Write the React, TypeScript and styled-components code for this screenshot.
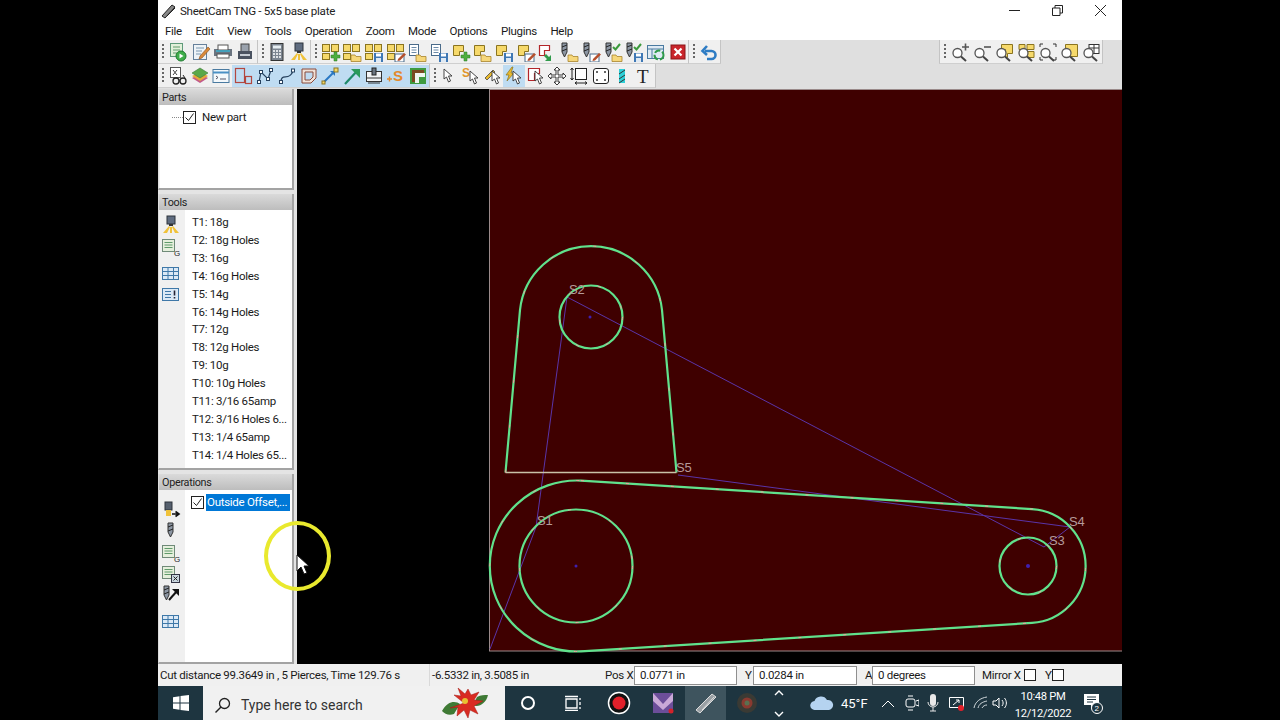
import React from "react";
import styled, { createGlobalStyle } from "styled-components";

const GlobalStyle = createGlobalStyle`
  html, body { margin: 0; padding: 0; background: #000; height: 100%; overflow: hidden; }
  * { box-sizing: border-box; }
`;

const UI = `Roboto, "Liberation Sans", sans-serif`;

const Stage = styled.div`
  position: relative;
  width: 964px;
  height: 720px;
  margin-left: 158px;
  display: flex;
  flex-direction: column;
  background: #f0f0f0;
  font-family: ${UI};
  font-size: 11.5px;
  letter-spacing: -0.28px;
  color: #1a1a1a;
  overflow: hidden;
`;
const TitleBar = styled.div`
  height: 20px;
  background: #fff;
  display: flex;
  align-items: center;
  gap: 2px;
  padding: 1px 0 0 2px;
  color: #222;
`;
const TitleText = styled.span`
  font-size: 11.6px;
`;
const WindowButtons = styled.div`
  margin-left: auto;
  display: flex;
`;
const WindowButton = styled.div`
  width: 43px;
  height: 18px;
  display: flex;
  align-items: center;
  justify-content: center;
`;
const MenuBar = styled.div`
  height: 20px;
  background: #fff;
  display: flex;
  align-items: center;
  gap: 13.5px;
  padding: 2px 0 0 7px;
`;
const ToolRows = styled.div`
  height: 49px;
  background: #dfdfdf;
  display: flex;
  flex-direction: column;
`;
const ToolRow = styled.div`
  height: 24px;
  display: flex;
`;
const Band = styled.div<{ $end?: boolean }>`
  height: 24px;
  display: flex;
  align-items: center;
  background: #f0f0f0;
  padding-left: 2px;
  border-right: 1px solid #c4c4c4;
  border-bottom: 1px solid #cfcfcf;
  ${(p) => p.$end && "margin-left: auto; margin-right: 19px; border-left: 1px solid #c4c4c4;"}
`;
const Grip = styled.div`
  width: 6px;
  height: 17px;
  margin-right: 1px;
  background: radial-gradient(circle, #666 0.9px, transparent 1.1px) center top / 6px 4px repeat-y;
`;
const ToolButton = styled.div<{ $active?: boolean; $pitch: number }>`
  width: ${(p) => p.$pitch}px;
  height: 22px;
  display: flex;
  align-items: center;
  justify-content: center;
  background: ${(p) => (p.$active ? "#bfdcf2" : "transparent")};
  svg { display: block; }
`;
const Main = styled.div`
  height: 575px;
  display: flex;
  background: #000;
`;
const Sidebar = styled.div`
  width: 139px;
  display: flex;
  flex-direction: column;
  gap: 4px;
  background: #e4e4e4;
  padding-right: 3px;
`;
const Panel = styled.section<{ $height: number }>`
  height: ${(p) => p.$height}px;
  display: flex;
  flex-direction: column;
  background: #f0f0f0;
  border-left: 1px solid #dcdcdc;
  border-right: 2px solid #a3a3a3;
  border-bottom: 2px solid #a3a3a3;
`;
const PanelHeader = styled.div`
  height: 16px;
  padding-left: 3px;
  font-size: 10.8px;
  line-height: 17px;
  color: #222;
  background: linear-gradient(#dadada, #bdbdbd);
`;
const PanelBody = styled.div`
  flex: 1;
  display: flex;
  min-height: 0;
`;
const TreeArea = styled.div`
  flex: 1;
  margin-left: 1px;
  background: #fff;
  padding: 3px 0 0 12px;
`;
const TreeRow = styled.div`
  display: flex;
  align-items: center;
  height: 18px;
  gap: 6px;
`;
const TreeDots = styled.span`
  width: 11px;
  margin-right: -6px;
  border-top: 1px dotted #888;
`;
const Check = styled.span<{ $size?: number }>`
  width: ${(p) => p.$size ?? 13}px;
  height: ${(p) => p.$size ?? 13}px;
  flex: none;
  border: 1px solid #222;
  background: #fff;
  display: flex;
  align-items: center;
  justify-content: center;
`;
const SideStrip = styled.div<{ $top: number }>`
  width: 26px;
  flex: none;
  display: flex;
  flex-direction: column;
  align-items: center;
  padding: ${(p) => p.$top}px 3px 0 0;
`;
const SideIcon = styled.div<{ $after?: number }>`
  height: 21px;
  display: flex;
  align-items: center;
  justify-content: center;
  margin-bottom: ${(p) => p.$after ?? 0}px;
`;
const ListArea = styled.div<{ $flush?: boolean }>`
  flex: 1;
  background: #fff;
  padding: ${(p) => (p.$flush ? "0" : "3px 0 0 7px")};
  overflow: hidden;
`;
const ListRow = styled.div`
  height: 17.92px;
  line-height: 18px;
  white-space: nowrap;
`;
const OpRow = styled.div`
  display: flex;
  align-items: center;
  height: 17px;
  margin: 4px 2px 0 6px;
  gap: 2px;
`;
const OpLabel = styled.span`
  flex: 1;
  height: 17px;
  line-height: 17px;
  padding-left: 1px;
  background: #0078d7;
  color: #fff;
  white-space: nowrap;
`;
const Canvas = styled.svg`
  flex: 1;
  display: block;
  height: 575px;
`;
const StatusBar = styled.div`
  height: 22px;
  display: flex;
  align-items: center;
  background: #f0f0f0;
  white-space: nowrap;
`;
const StatusCell = styled.div<{ $width: number; $line?: boolean }>`
  width: ${(p) => p.$width}px;
  flex: none;
  height: 100%;
  display: flex;
  align-items: center;
  padding-left: 2px;
  ${(p) => p.$line && "border-right: 1px solid #d9d9d9;"}
`;
const FieldLabel = styled.span<{ $left: number; $width: number }>`
  margin-left: ${(p) => p.$left}px;
  width: ${(p) => p.$width}px;
  flex: none;
`;
const Field = styled.div<{ $width: number }>`
  width: ${(p) => p.$width}px;
  height: 19px;
  border: 1px solid #8f8f8f;
  background: #fff;
  padding-left: 5px;
  line-height: 17px;
`;
const TaskBar = styled.div`
  height: 34px;
  display: flex;
  align-items: center;
  background: #1e3540;
  color: #fff;
`;
const StartButton = styled.div`
  width: 45px;
  height: 34px;
  display: flex;
  align-items: center;
  justify-content: center;
`;
const SearchBox = styled.div`
  width: 302px;
  height: 34px;
  background: #f1f1f1;
  color: #333;
  display: flex;
  align-items: center;
  gap: 9px;
  padding: 3px 0 0 11px;
  font-size: 14px;
  letter-spacing: 0;
  position: relative;
`;
const SearchArt = styled.div`
  position: absolute;
  right: 15px;
  top: 0;
`;
const TaskSlot = styled.div<{ $width: number; $active?: boolean }>`
  width: ${(p) => p.$width}px;
  height: 34px;
  flex: none;
  display: flex;
  align-items: center;
  justify-content: center;
  background: ${(p) => (p.$active ? "#3e545e" : "transparent")};
`;
const Weather = styled.span`
  width: 42px;
  flex: none;
  padding-left: 7px;
  font-size: 13px;
  letter-spacing: 0;
`;
const Clock = styled.div`
  width: 70px;
  flex: none;
  padding-top: 3px;
  text-align: center;
  font-size: 11.2px;
  line-height: 17px;
`;
const Highlight = styled.div`
  position: absolute;
  left: 106px;
  top: 521px;
  width: 67px;
  height: 70px;
  border-radius: 50%;
  border: 4px solid #e9e92e;
  pointer-events: none;
`;
const Pointer = styled.svg`
  position: absolute;
  left: 138px;
  top: 554px;
`;

/* ---- small icon bits ---- */
const Plus = () => <path d="M13 10h3v3h3v3h-3v3h-3v-3h-3v-3h3z" fill="#4fae3f" stroke="#2d7a2a" strokeWidth=".5" />;
const FolderB = () => <path d="M9 13h4l1 1.500h5v5H9z" fill="#f6d77a" stroke="#a8842c" strokeWidth=".8" />;
const SaveB = () => (
  <>
    <rect x="10" y="11" width="9" height="9" fill="#3f78b5" />
    <rect x="12" y="11.500" width="5" height="3" fill="#fff" />
    <rect x="12" y="16" width="5" height="4" fill="#dfe9f3" />
  </>
);
const EditB = () => (
  <>
    <rect x="9" y="12" width="9" height="8" fill="#fff" stroke="#4a6b8a" />
    <path d="M12 17l6-6 2 1.500-6 6-2.500.5z" fill="#b5502e" />
  </>
);
const Multi = () => (
  <g fill="#f6d96b" stroke="#8a7420" strokeWidth="1">
    <rect x="1.500" y="2.500" width="7" height="7" />
    <rect x="10.500" y="2.500" width="7" height="7" />
    <rect x="1.500" y="11.500" width="7" height="6" />
  </g>
);
const Single = () => <path d="M2.500 3.500h10v6h-4v4h-6z" fill="#f6d96b" stroke="#8a7420" />;
const Docs = () => (
  <g fill="#fff" stroke="#4a6b8a">
    <rect x="2.500" y="2.500" width="9" height="11" />
    <path d="M4.500 5.500h5M4.500 8h5M4.500 10.500h5" stroke="#6b8aa8" />
  </g>
);
const Drill = ({ x = 3 }: { x?: number }) => (
  <g transform={`translate(${x} 1)`}>
    <path d="M0 0h5v9l-2.500 5L0 9z" fill="#8c96a3" stroke="#333" />
    <path d="M0 4l5-2M0 8l5-2" stroke="#222" />
  </g>
);
const Tick = () => <path d="M10 5l2.500 2.500L17 2" fill="none" stroke="#3c9a3c" strokeWidth="2" />;
const Head = () => (
  <>
    <rect x="6" y="1" width="8" height="8" fill="#5f6c80" stroke="#2d333b" />
    <rect x="8" y="9" width="4" height="2" fill="#333" />
    <path d="M8 11l-6 7h4l3-6zM12 11l6 7h-4l-3-6zM9 12h2v6H9z" fill="#f0c23a" />
  </>
);
const DocG = () => (
  <>
    <rect x="1.500" y="2.500" width="12" height="12" fill="#e5efdc" stroke="#6f8a78" />
    <path d="M3.500 5.500h8M3.500 8h8M3.500 10.500h8" stroke="#5f9a6a" />
  </>
);
const Table = () => (
  <>
    <rect x="1.500" y="3.500" width="16" height="12" fill="#dbe9f6" stroke="#3f78a8" />
    <path d="M1.500 7.500h16M1.500 11.500h16M7 3.500v12M12.500 3.500v12" stroke="#3f78a8" />
  </>
);
const CursorMini = ({ x = 9, y = 5 }: { x?: number; y?: number }) => (
  <path transform={`translate(${x} ${y})`} d="M0 0l8 7H4.500l2 5-2 1-2-5L0 10z" fill="#fff" stroke="#333" strokeWidth=".9" />
);
const Lens = () => (
  <>
    <circle cx="7.500" cy="11" r="4.500" fill="#fff" stroke="#555" strokeWidth="1.300" />
    <path d="M11 14.500l5 4.500" stroke="#444" strokeWidth="2" />
  </>
);
const YellowDoc = ({ d }: { d: string }) => <path d={d} fill="#f6d96b" stroke="#8a7420" />;

const icons: Record<string, React.ReactNode> = {
  run: (<><rect x="2.500" y="1.500" width="12" height="13" fill="#e2f0da" stroke="#5f9a7a" /><path d="M5 5h7M5 8h7M5 11h4" stroke="#5f9a6a" /><circle cx="13" cy="14" r="5" fill="#3fae4a" stroke="#1f7a2f" /><path d="M11.500 11.500l4 2.500-4 2.500z" fill="#fff" /></>),
  editDoc: (<><rect x="2.500" y="2.500" width="13" height="15" fill="#eef3f7" stroke="#66809a" /><path d="M5 6h8M5 9h6M5 12h5" stroke="#7a97b0" /><path d="M9 14l8-9 2 2-8 9-3 1z" fill="#d98a3a" stroke="#8a4f1e" strokeWidth=".6" /></>),
  preview: (<><rect x="1" y="7" width="18" height="7" fill="#6a7480" /><rect x="5" y="3" width="10" height="5" fill="#fff" stroke="#555" /><rect x="4" y="12" width="12" height="4" fill="#fff" stroke="#555" /><path d="M3 9h14" stroke="#3ab0d0" strokeWidth="1.500" /></>),
  printer: (<><rect x="6" y="2" width="8" height="8" fill="#9aa2ad" stroke="#444" /><rect x="3" y="9" width="14" height="8" fill="#4a5260" /><rect x="5" y="12" width="10" height="2" fill="#c6ccd4" /></>),
  calc: (<><rect x="4" y="1.500" width="12" height="17" fill="#7c8590" stroke="#333" /><rect x="6" y="3.500" width="8" height="3" fill="#e6eef2" /><path d="M6 9h2M9 9h2M12 9h2M6 12h2M9 12h2M12 12h2M6 15h2M9 15h2M12 15h2" stroke="#fff" strokeWidth="1.500" /></>),
  head: <Head />,
  multiPlus: (<><Multi /><Plus /></>),
  multiFolder: (<><Multi /><FolderB /></>),
  multiSave: (<><Multi /><SaveB /></>),
  multiEdit: (<><Multi /><EditB /></>),
  docFolder: (<><Docs /><FolderB /></>),
  docSave: (<><Docs /><SaveB /></>),
  onePlus: (<><Single /><Plus /></>),
  oneFolder: (<><Single /><FolderB /></>),
  oneSave: (<><Single /><SaveB /></>),
  oneEdit: (<><Single /><EditB /></>),
  redArrow: (<><path d="M2.500 3.500h10v5h-5v5h-5z" fill="#fff" stroke="#b3262a" strokeWidth="1.200" /><path d="M9 12l3 3 2-2v6h-6l2-2-3-3z" fill="#2f9a4a" /></>),
  drillFolder: (<><Drill /><FolderB /></>),
  drillEdit: (<><Drill /><EditB /></>),
  drillTickFolder: (<><Drill /><Tick /><FolderB /></>),
  drillTickSave: (<><Drill /><Tick /><SaveB /></>),
  refresh: (<><rect x="1.500" y="3.500" width="16" height="13" fill="#dfeaf4" stroke="#4a7aa0" /><path d="M1.500 7h16M6 7v9" stroke="#4a7aa0" /><circle cx="13" cy="13" r="4.500" fill="none" stroke="#2f9a4a" strokeWidth="2" strokeDasharray="6 2" /></>),
  cross: (<><rect x="3" y="3" width="14" height="14" fill="#c9252b" stroke="#8a1519" /><path d="M6.500 6.500l7 7M13.500 6.500l-7 7" stroke="#fff" strokeWidth="2.200" /></>),
  undo: (<path d="M6 9h6.500a4 4 0 0 1 0 8H8M8 4L3.500 9 8 13" fill="none" stroke="#2e7cc4" strokeWidth="2.600" />),
  glasses: (<><rect x="2.500" y="1.500" width="10" height="10" fill="#fff" stroke="#555" /><path d="M5 4l4 5M9 4L5 9" stroke="#444" /><circle cx="8" cy="15" r="3" fill="none" stroke="#222" strokeWidth="1.300" /><circle cx="15" cy="15" r="3" fill="none" stroke="#222" strokeWidth="1.300" /><path d="M11 15h1M17 12l-2-3" stroke="#222" /></>),
  layers: (<><path d="M10 8l8 4-8 5-8-5z" fill="#c25a8a" /><path d="M10 6l8 4-8 5-8-5z" fill="#e3a93a" /><path d="M10 2l8 5-8 5-8-5z" fill="#5aa84a" stroke="#3a7a3a" strokeWidth=".6" /></>),
  terminal: (<><rect x="2" y="3.500" width="16" height="13" fill="#f4f8fb" stroke="#4a7aa0" /><path d="M2 6.500h16" stroke="#4a90c4" strokeWidth="2" /><path d="M5 10l2 1.500-2 1.500M9 13h6" stroke="#556" fill="none" /></>),
  twoShapes: (<><rect x="2.500" y="2.500" width="9" height="14" fill="none" stroke="#b3473f" strokeWidth="1.200" /><rect x="12.500" y="10.500" width="6" height="7" fill="none" stroke="#b3473f" strokeWidth="1.200" /></>),
  nodes: (<><path d="M4 16L6 6l7 7 3-9" fill="none" stroke="#27415e" strokeWidth="1.200" /><g fill="#fff" stroke="#27415e"><rect x="2.500" y="14.500" width="3" height="3" /><rect x="4.500" y="4.500" width="3" height="3" /><rect x="11.500" y="11.500" width="3" height="3" /><rect x="14.500" y="2.500" width="3" height="3" /></g></>),
  curve: (<><path d="M4 16C4 6 12 16 16 5" fill="none" stroke="#27415e" strokeWidth="1.300" /><g fill="#fff" stroke="#27415e"><rect x="2.500" y="14.500" width="3" height="3" /><rect x="14.500" y="3" width="3" height="3" /></g></>),
  outline: (<path d="M3 3h14v9l-5 5H3zM6 6v8h5l3-3V6z" fill="#f0e2d8" stroke="#8a4a3a" />),
  blueArrow: (<><path d="M3 17L14 6" stroke="#2a78c4" strokeWidth="2" /><path d="M10 5h5v5z" fill="#2a78c4" /><rect x="14" y="2" width="4" height="4" fill="#f6d96b" stroke="#8a7420" /><rect x="2" y="15" width="3" height="3" fill="#f6d96b" stroke="#8a7420" /></>),
  greenArrow: (<><path d="M3 18L16 4" stroke="#1f8a6a" strokeWidth="2.200" /><path d="M9 3h9v9z" fill="#2a9a5a" /></>),
  machine: (<><rect x="2.500" y="5.500" width="15" height="10" fill="#f2f4f6" stroke="#333" /><rect x="8" y="2" width="4" height="7" fill="#6a7480" stroke="#222" /><path d="M2.500 12h15M4 17h12" stroke="#333" /></>),
  plusS: (<><path d="M1 13h5M3.500 10.500v5" stroke="#e48a2c" strokeWidth="1.400" /><text x="7" y="15" fontSize="15" fontWeight="700" fontFamily="Liberation Sans, sans-serif" fill="#e48a2c">S</text></>),
  brownSquare: (<><rect x="3" y="3" width="14" height="14" fill="#7a4a20" stroke="#3f9a3f" strokeWidth="2" /><rect x="7" y="7" width="10" height="10" fill="#eef6ee" /><path d="M11 11h6v6h-6z" fill="#3f9a3f" /></>),
  cursor: <CursorMini x={5} y={3} />,
  sCursor: (<><text x="1" y="11" fontSize="12" fontWeight="700" fontFamily="Liberation Sans, sans-serif" fill="#e0962c">S</text><CursorMini /></>),
  lineCursor: (<><path d="M2 12l8-8 2 2-8 8z" fill="#e8b92e" stroke="#333" strokeWidth=".7" /><CursorMini /></>),
  boltCursor: (<><path d="M8 1L2 9h3l-2 6 7-8H7l2-6z" fill="#e8b92e" stroke="#8a7420" strokeWidth=".7" /><CursorMini /></>),
  redCursor: (<><path d="M2.500 2.500h11v5h-5v7h-6z" fill="#fff" stroke="#b3262a" strokeWidth="1.200" /><CursorMini /></>),
  move: (<path d="M10 1l3 3h-2v5h5V7l3 3-3 3v-2h-5v5h2l-3 3-3-3h2v-5H4v2l-3-3 3-3v2h5V4H7z" fill="#fff" stroke="#222" strokeWidth=".9" />),
  resize: (<><rect x="6.500" y="2.500" width="11" height="11" fill="#fff" stroke="#222" /><path d="M3 2v12M1.500 4L3 2l1.500 2M1.500 12L3 14l1.500-2M6 17h12M8 15.500L6 17l2 1.500M16 15.500l2 1.500-2 1.500" fill="none" stroke="#222" /></>),
  frame: (<><rect x="2.500" y="2.500" width="15" height="15" rx="2.500" fill="#fff" stroke="#222" /><g fill="#333"><circle cx="6" cy="6" r="1" /><circle cx="14" cy="6" r="1" /><circle cx="6" cy="14" r="1" /><circle cx="14" cy="14" r="1" /></g></>),
  cyanDrill: (<><rect x="7" y="3" width="6" height="14" fill="#2fd0d8" /><path d="M7 8l6-4M7 13l6-4M7 17l6-4" stroke="#333" /></>),
  text: (<text x="3" y="17" fontSize="19" fontFamily="Liberation Serif, serif" fill="#222">T</text>),
  zoomIn: (<><Lens /><path d="M15.500 1.500v7M12 5h7" stroke="#555" strokeWidth="1.600" /></>),
  zoomOut: (<><Lens /><path d="M12 5h7" stroke="#555" strokeWidth="1.600" /></>),
  zoomPart: (<><YellowDoc d="M7.500 2.500h11v9h-5v4h-2v-8h-4z" /><Lens /></>),
  zoomParts: (<><YellowDoc d="M3 2.500h6v5H3zM11 2.500h7v5h-7zM11 9.500h7v6h-7z" /><Lens /></>),
  zoomFit: (<><path d="M2 5V2h3M15 2h3v3M2 15v3h3M15 18h3v-3" fill="none" stroke="#333" /><Lens /></>),
  zoomSheet: (<><YellowDoc d="M6.500 2.500h12v12h-12z" /><Lens /></>),
  zoomMachine: (<><rect x="8" y="2.500" width="10" height="9" fill="#fff" stroke="#333" /><path d="M8 6h10M13 2v9" stroke="#333" /><Lens /></>),
  docG: (<><DocG /><text x="13" y="19" fontSize="8" fontFamily="Liberation Sans, sans-serif" fill="#222">G</text></>),
  docX: (<><DocG /><rect x="10.500" y="10.500" width="8" height="8" fill="#c9d6df" stroke="#334" /><path d="M12.500 12.500l4 4M16.500 12.500l-4 4" stroke="#222" /></>),
  table: <Table />,
  listBang: (<><rect x="1.500" y="3.500" width="16" height="12" fill="#dbe9f6" stroke="#3f78a8" /><path d="M4 6.500h6M4 9.500h6M4 12.500h6" stroke="#3f78a8" /><path d="M13.500 5.500v5M13.500 12v1.500" stroke="#223" strokeWidth="1.600" /></>),
  headArrow: (<><rect x="4" y="1" width="7" height="8" fill="#56606e" stroke="#2d333b" /><rect x="5" y="9" width="5" height="6" fill="#f0c23a" /><path d="M11 13h6M14.500 10.500L18 13l-3.500 2.500" fill="none" stroke="#111" strokeWidth="1.600" /></>),
  drill: <Drill x={7} />,
  drillArrow: (<><Drill x={3} /><path d="M8 15L16 6" stroke="#111" strokeWidth="2" /><path d="M11 4h7v7z" fill="#111" /></>),
};

const Icon = ({ name, size = 20 }: { name: string; size?: number }) => (
  <svg width={size} height={size} viewBox="0 0 20 20">{icons[name]}</svg>
);

const Tools = ({ names, active = [], pitch = 21.7 }: { names: string[]; active?: string[]; pitch?: number }) => (
  <>
    {names.map((n) => (
      <ToolButton key={n} $pitch={pitch} $active={active.includes(n)}><Icon name={n} /></ToolButton>
    ))}
  </>
);

const toolNames = [
  "T1: 18g", "T2: 18g Holes", "T3: 16g", "T4: 16g Holes", "T5: 14g", "T6: 14g Holes", "T7: 12g",
  "T8: 12g Holes", "T9: 10g", "T10: 10g Holes", "T11: 3/16 65amp", "T12: 3/16 Holes 6...", "T13: 1/4 65amp", "T14: 1/4 Holes 65...",
];
const menus = ["File", "Edit", "View", "Tools", "Operation", "Zoom", "Mode", "Options", "Plugins", "Help"];
const activeRow2 = ["twoShapes", "nodes", "curve", "outline", "blueArrow", "greenArrow", "machine", "plusS", "brownSquare", "boltCursor"];

const Tick12 = () => (
  <svg width="11" height="11" viewBox="0 0 11 11"><path d="M1.500 5.500l3 3 5-7" fill="none" stroke="#222" /></svg>
);

const Drawing = () => {
  const green = "#60e28c";
  const partOne = "M505.500 472.500L520 310A71.400 71.400 0 0 1 662 310L676.500 472.500";
  const partTwo = "M581 480.600L1032 509.100A57 57 0 0 1 1032 622.900L581 651.400A87 85.500 0 1 1 581 480.600Z";
  const dash = { fill: "none", stroke: "#f0a0a0", strokeWidth: 1, strokeDasharray: "3 42" };
  const labels: [string, number, number][] = [["S2", 569, 294], ["S5", 676, 472], ["S1", 537, 525], ["S3", 1049, 545], ["S4", 1069, 526]];
  return (
    <Canvas viewBox="297 89 825 575">
      <rect x="297" y="89" width="825" height="575" fill="#000" />
      <rect x="489.500" y="89.500" width="633" height="561.500" fill="#3f0000" stroke="#9a8a8a" strokeWidth="1" />
      <g fill="none" stroke="#5a34a8" strokeWidth="1">
        <path d="M490 649L536 527L567 297L1044 547L1070 527L678 475" />
      </g>
      <g fill="none" stroke={green} strokeWidth="2.200">
        <path d={partOne} />
        <circle cx="591" cy="317" r="31.500" />
        <path d={partTwo} />
        <circle cx="576" cy="566" r="56.500" />
        <circle cx="1028" cy="566" r="28.500" />
      </g>
      <path d="M505.500 472.500H676.500" stroke="#c9c2a8" strokeWidth="1.600" />
      <g {...dash}>
        <path d={partOne} />
        <path d={partTwo} />
        <circle cx="591" cy="317" r="31.500" strokeDasharray="3 28" />
        <circle cx="576" cy="566" r="56.500" strokeDasharray="3 40" />
        <circle cx="1028" cy="566" r="28.500" strokeDasharray="3 28" />
      </g>
      <g fill="#4020b0">
        <circle cx="590" cy="317" r="1.500" />
        <circle cx="576" cy="566" r="1.500" />
        <circle cx="1028" cy="566" r="2" />
      </g>
      {labels.map(([t, x, y]) => (
        <text key={t} x={x} y={y} fontSize="13" fontFamily="Liberation Sans, sans-serif" fill="#b59a9a">{t}</text>
      ))}
    </Canvas>
  );
};

const Poinsettia = () => (
  <svg width="50" height="34" viewBox="0 0 50 34">
    <path d="M2 25C8 14 16 15 20 18L14 28C9 30 5 28 2 25zM48 9C46 18 38 22 33 19L37 11C41 9 44 9 48 9z" fill="#3f7a35" />
    <path d="M24 17L14 9l7 1-3-8 7 6 3-5 3 6 8-3-5 8 9 1-9 5 4 8-8-4-2 8-4-8-7 6 1-9-8 1z" fill="#d92b22" stroke="#a31a14" strokeWidth=".5" />
    <circle cx="25" cy="15" r="3" fill="#e8c132" />
  </svg>
);

export default function App() {
  return (
    <>
      <GlobalStyle />
      <Stage>
        <TitleBar>
          <svg width="18" height="16" viewBox="0 0 18 16"><path d="M2 13L12 2l3 2L5 15zM7 13l8-8" fill="#888" stroke="#222" strokeWidth="1" /></svg>
          <TitleText>SheetCam TNG - 5x5 base plate</TitleText>
          <WindowButtons>
            <WindowButton><svg width="11" height="11"><path d="M0 5.500h11" stroke="#222" /></svg></WindowButton>
            <WindowButton><svg width="11" height="11"><path d="M.5 3h7.500v7.500H.5zM3 3V.5h7.500V8H8" fill="none" stroke="#222" /></svg></WindowButton>
            <WindowButton><svg width="13" height="13"><path d="M1 1l11 11M12 1L1 12" stroke="#222" /></svg></WindowButton>
          </WindowButtons>
        </TitleBar>
        <MenuBar>{menus.map((m) => <span key={m}>{m}</span>)}</MenuBar>
        <ToolRows>
          <ToolRow>
            <Band><Grip /><Tools pitch={22.4} names={["run", "editDoc", "preview", "printer"]} /></Band>
            <Band><Grip /><Tools pitch={21.6} names={["calc", "head"]} /></Band>
            <Band><Grip /><Tools names={["multiPlus", "multiFolder", "multiSave", "multiEdit", "docFolder", "docSave", "onePlus", "oneFolder", "oneSave", "oneEdit", "redArrow", "drillFolder", "drillEdit", "drillTickFolder", "drillTickSave", "refresh", "cross"]} /></Band>
            <Band><Grip /><Tools pitch={22} names={["undo"]} /></Band>
            <Band $end><Grip /><Tools pitch={21.8} names={["zoomIn", "zoomOut", "zoomPart", "zoomParts", "zoomFit", "zoomSheet", "zoomMachine"]} /></Band>
          </ToolRow>
          <ToolRow>
            <Band><Grip /><Tools pitch={21.8} active={activeRow2} names={["glasses", "layers", "terminal", "twoShapes", "nodes", "curve", "outline", "blueArrow", "greenArrow", "machine", "plusS", "brownSquare"]} /></Band>
            <Band><Grip /><Tools pitch={21.6} active={activeRow2} names={["cursor", "sCursor", "lineCursor", "boltCursor", "redCursor", "move", "resize", "frame", "cyanDrill", "text"]} /></Band>
          </ToolRow>
        </ToolRows>
        <Main>
          <Sidebar>
            <Panel $height={101}>
              <PanelHeader>Parts</PanelHeader>
              <PanelBody>
                <TreeArea>
                  <TreeRow><TreeDots /><Check><Tick12 /></Check><span>New part</span></TreeRow>
                </TreeArea>
              </PanelBody>
            </Panel>
            <Panel $height={276}>
              <PanelHeader>Tools</PanelHeader>
              <PanelBody>
                <SideStrip $top={4}>
                  <SideIcon $after={1}><Icon name="head" /></SideIcon>
                  <SideIcon $after={6}><Icon name="docG" /></SideIcon>
                  <SideIcon><Icon name="table" /></SideIcon>
                  <SideIcon><Icon name="listBang" /></SideIcon>
                </SideStrip>
                <ListArea>{toolNames.map((t) => <ListRow key={t}>{t}</ListRow>)}</ListArea>
              </PanelBody>
            </Panel>
            <Panel $height={190}>
              <PanelHeader>Operations</PanelHeader>
              <PanelBody>
                <SideStrip $top={10}>
                  <SideIcon><Icon name="headArrow" /></SideIcon>
                  <SideIcon><Icon name="drill" /></SideIcon>
                  <SideIcon><Icon name="docG" /></SideIcon>
                  <SideIcon><Icon name="docX" /></SideIcon>
                  <SideIcon $after={6}><Icon name="drillArrow" /></SideIcon>
                  <SideIcon><Icon name="table" /></SideIcon>
                </SideStrip>
                <ListArea $flush>
                  <OpRow><Check><Tick12 /></Check><OpLabel>Outside Offset,...</OpLabel></OpRow>
                </ListArea>
              </PanelBody>
            </Panel>
          </Sidebar>
          <Drawing />
        </Main>
        <StatusBar>
          <StatusCell $width={272} $line>Cut distance 99.3649 in , 5 Pierces, Time 129.76 s</StatusCell>
          <StatusCell $width={170}>-6.5332 in, 3.5085 in</StatusCell>
          <FieldLabel $left={5} $width={29}>Pos X</FieldLabel>
          <Field $width={103}>0.0771 in</Field>
          <FieldLabel $left={8} $width={8}>Y</FieldLabel>
          <Field $width={104}>0.0284 in</Field>
          <FieldLabel $left={8} $width={7}>A</FieldLabel>
          <Field $width={103}>0 degrees</Field>
          <FieldLabel $left={7} $width={42}>Mirror X</FieldLabel>
          <Check $size={12} />
          <FieldLabel $left={9} $width={7}>Y</FieldLabel>
          <Check $size={12} />
        </StatusBar>
        <TaskBar>
          <StartButton>
            <svg width="16" height="16" viewBox="0 0 16 16"><path d="M0 2.200l6.500-1v6.300H0zM7.500 1l8.500-1v7.500H7.500zM0 8.500h6.500v6.300l-6.500-1zM7.500 8.500H16V16l-8.500-1.100z" fill="#fff" /></svg>
          </StartButton>
          <SearchBox>
            <svg width="18" height="18" viewBox="0 0 18 18"><circle cx="10.500" cy="7.500" r="5" fill="none" stroke="#222" strokeWidth="1.300" /><path d="M7 11l-5.500 5.500" stroke="#222" strokeWidth="1.500" /></svg>
            <span>Type here to search</span>
            <SearchArt><Poinsettia /></SearchArt>
          </SearchBox>
          <TaskSlot $width={45}><svg width="16" height="16"><circle cx="8" cy="8" r="6" fill="none" stroke="#fff" strokeWidth="2" /></svg></TaskSlot>
          <TaskSlot $width={45}><svg width="18" height="16"><path d="M2 4h11v9H2zM1 1.500h13M1 15.500h13M16 3v2M16 7v3M16 12v2" fill="none" stroke="#fff" strokeWidth="1.300" /></svg></TaskSlot>
          <TaskSlot $width={47}><svg width="24" height="24"><circle cx="12" cy="12" r="10.500" fill="#111" stroke="#fff" strokeWidth="1.500" /><circle cx="12" cy="12" r="6.500" fill="#e3202a" /></svg></TaskSlot>
          <TaskSlot $width={43}><svg width="22" height="22" viewBox="0 0 22 22"><rect width="20" height="20" y="1" fill="#6c4e9a" /><path d="M0 1l10 11L20 1v8l-10 9L0 9z" fill="#c9a8d8" /><circle cx="18" cy="19" r="2.500" fill="#d3222a" /></svg></TaskSlot>
          <TaskSlot $width={41} $active><svg width="24" height="22" viewBox="0 0 24 22"><path d="M2 18L18 2l4 3L6 21zM8 18L20 5" fill="#9aa0a4" stroke="#ddd" /></svg></TaskSlot>
          <TaskSlot $width={42}><svg width="22" height="22"><circle cx="11" cy="11" r="10" fill="#3a3a34" /><circle cx="11" cy="11" r="5.500" fill="#8a3a30" /><circle cx="11" cy="11" r="2.500" fill="#5a7050" /></svg></TaskSlot>
          <TaskSlot $width={22}><svg width="10" height="30" viewBox="0 0 10 30"><path d="M1 7l4-4 4 4M1 24l4 4 4-4" fill="none" stroke="#fff" strokeWidth="1.400" /></svg></TaskSlot>
          <TaskSlot $width={20} />
          <TaskSlot $width={24}><svg width="24" height="14" viewBox="0 0 24 14"><path d="M5 14a4.500 4.500 0 0 1-.5-9A7 7 0 0 1 17 4a5 5 0 0 1 2 10z" fill="#b5d3f0" /></svg></TaskSlot>
          <Weather>45°F</Weather>
          <TaskSlot $width={24}><svg width="14" height="9"><path d="M1 8l6-6 6 6" fill="none" stroke="#fff" /></svg></TaskSlot>
          <TaskSlot $width={24}><svg width="14" height="16"><rect x="1" y="4" width="9" height="8" rx="2" fill="none" stroke="#fff" /><path d="M3 1h5M3 15h5M11 6l3-1v6l-3-1" fill="none" stroke="#fff" /></svg></TaskSlot>
          <TaskSlot $width={18}><svg width="12" height="18"><rect x="3" y="0" width="6" height="12" rx="3" fill="#e8e8e8" /><path d="M1 8a5 5 0 0 0 10 0M6 13v4M3 17h6" fill="none" stroke="#e8e8e8" /></svg></TaskSlot>
          <TaskSlot $width={30}><svg width="18" height="18"><path d="M1.500 3.500h14v10h-14z" fill="none" stroke="#fff" /><path d="M5 11l6-5M8 6h3v3" fill="none" stroke="#fff" /><circle cx="13" cy="14" r="3" fill="#e3202a" /></svg></TaskSlot>
          <TaskSlot $width={18}><svg width="16" height="14"><path d="M1 12C2 6 7 2 14 1M5 12C6 8 9 6 14 5M9 12c1-2 3-3 5-3" fill="none" stroke="#cfd6da" /></svg></TaskSlot>
          <TaskSlot $width={18}><svg width="15" height="14"><path d="M1 5h3l3-3v10L4 9H1zM10 4c1.500 2 1.500 4 0 6M12.500 2c2.500 3 2.500 7 0 10" fill="none" stroke="#fff" /></svg></TaskSlot>
          <Clock>10:48 PM<br />12/12/2022</Clock>
          <TaskSlot $width={30}><svg width="22" height="22" viewBox="0 0 22 22"><path d="M2 2h15v11h-5l-3 4v-4H2z" fill="#fff" /><path d="M5 5h9M5 7.500h9M5 10h6" stroke="#1e3540" /><circle cx="15" cy="16" r="5.500" fill="#1e3540" stroke="#fff" /><text x="12.500" y="19" fontSize="8" fill="#fff" fontFamily="Liberation Sans, sans-serif">2</text></svg></TaskSlot>
        </TaskBar>
        <Highlight />
        <Pointer width="14" height="22" viewBox="0 0 14 22"><path d="M1 1v16l4-4 3 7 3-1-3-7h5z" fill="#fff" stroke="#111" /></Pointer>
      </Stage>
    </>
  );
}
